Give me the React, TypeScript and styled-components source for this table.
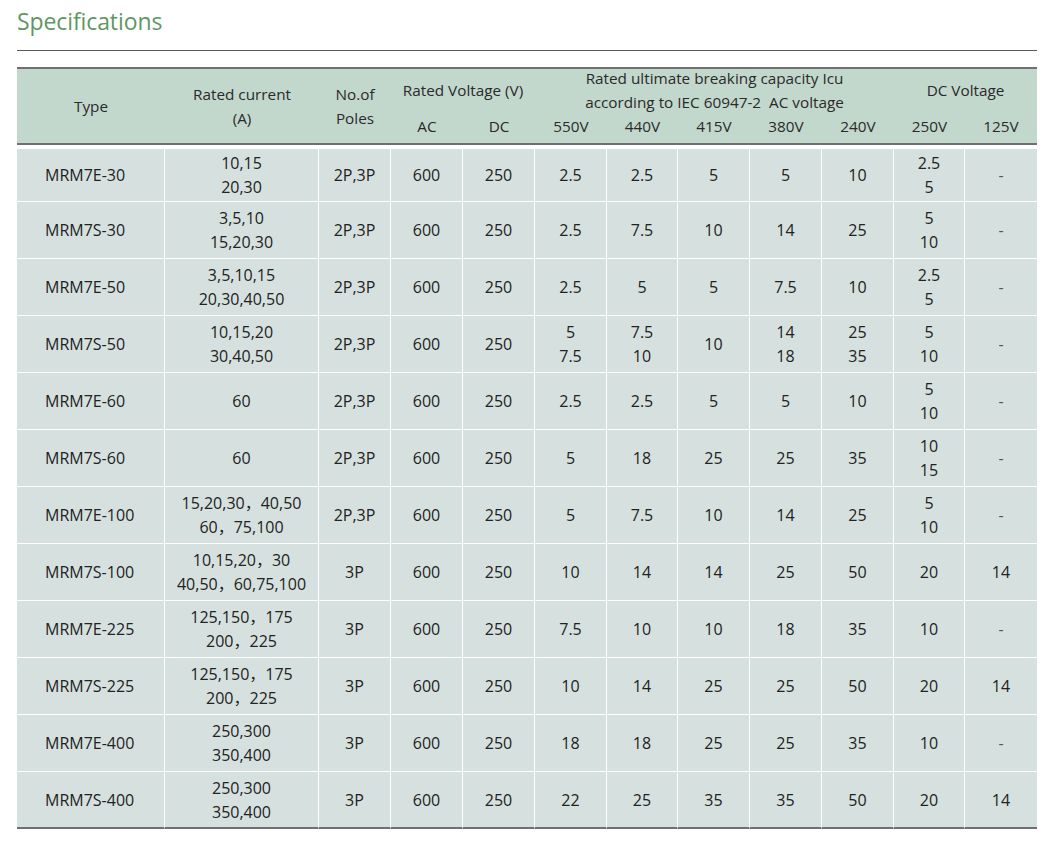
import React from "react";
import styled, { createGlobalStyle } from "styled-components";

const GlobalStyle = createGlobalStyle`
  html, body {
    margin: 0;
    padding: 0;
    background: #ffffff;
  }
  body {
    font-family: "Open Sans", "Noto Sans", "Noto Sans CJK SC", sans-serif;
    color: #222;
  }
`;

const colors = {
  green: "#5f9762",
  head: "#c3d8cd",
  body: "#d6e1df",
  border: "#707070",
};

const Page = styled.div`
  width: 1020px;
  padding: 0 18px 16px 17px;
`;

const Title = styled.h2`
  margin: 6px 0 0;
  font-size: 23px;
  line-height: 30px;
  font-weight: 400;
  color: ${colors.green};
  letter-spacing: -0.1px;
`;

const Rule = styled.hr`
  margin: 14px 0 0;
  border: 0;
  border-top: 1.5px solid #5a5a5a;
  height: 0;
`;

const SpecTable = styled.table`
  margin-top: 16px;
  width: 1020px;
  table-layout: fixed;
  border-collapse: separate;
  border-spacing: 0;
  font-size: 16px;
`;

const HeadCell = styled.th<{ $top?: boolean; $bottom?: boolean; $tall?: number; $padBottom?: number }>`
  background: ${colors.head};
  font-weight: 400;
  font-size: 15.3px;
  color: #2a2a2a;
  text-align: center;
  vertical-align: middle;
  padding: 0 0 ${(p) => p.$padBottom ?? 0}px;
  line-height: 24px;
  height: ${(p) => p.$tall ?? 28}px;
  border-top: ${(p) => (p.$top ? `2px solid ${colors.border}` : "0")};
  border-bottom: ${(p) => (p.$bottom ? `2px solid ${colors.border}` : "0")};
`;

const HeadText = styled.span<{ $shift?: number }>`
  display: block;
  margin: ${(p) => p.$shift ?? 0}px 0;
`;

const BodyRow = styled.tr`
  height: 57px;
`;

const BodyCell = styled.td<{ $left?: boolean; $first?: boolean; $last?: boolean; $end?: boolean }>`
  background: ${colors.body};
  color: #222;
  text-align: ${(p) => (p.$left ? "left" : "center")};
  padding: 0 0 0 ${(p) => (p.$left ? "28px" : "0")};
  vertical-align: middle;
  line-height: 24px;
  border-right: ${(p) => (p.$end ? "0" : "1px solid #ffffff")};
  border-top: ${(p) => (p.$first ? "4px solid #ffffff" : "0")};
  border-bottom: ${(p) => (p.$last ? `2px solid ${colors.border}` : "1px solid #ffffff")};
`;

const Dash = styled.span`
  color: #555;
`;

type Row = string[][];

const rows: Row[] = [
  [["MRM7E-30"], ["10,15", "20,30"], ["2P,3P"], ["600"], ["250"], ["2.5"], ["2.5"], ["5"], ["5"], ["10"], ["2.5", "5"], ["-"]],
  [["MRM7S-30"], ["3,5,10", "15,20,30"], ["2P,3P"], ["600"], ["250"], ["2.5"], ["7.5"], ["10"], ["14"], ["25"], ["5", "10"], ["-"]],
  [["MRM7E-50"], ["3,5,10,15", "20,30,40,50"], ["2P,3P"], ["600"], ["250"], ["2.5"], ["5"], ["5"], ["7.5"], ["10"], ["2.5", "5"], ["-"]],
  [["MRM7S-50"], ["10,15,20", "30,40,50"], ["2P,3P"], ["600"], ["250"], ["5", "7.5"], ["7.5", "10"], ["10"], ["14", "18"], ["25", "35"], ["5", "10"], ["-"]],
  [["MRM7E-60"], ["60"], ["2P,3P"], ["600"], ["250"], ["2.5"], ["2.5"], ["5"], ["5"], ["10"], ["5", "10"], ["-"]],
  [["MRM7S-60"], ["60"], ["2P,3P"], ["600"], ["250"], ["5"], ["18"], ["25"], ["25"], ["35"], ["10", "15"], ["-"]],
  [["MRM7E-100"], ["15,20,30，40,50", "60，75,100"], ["2P,3P"], ["600"], ["250"], ["5"], ["7.5"], ["10"], ["14"], ["25"], ["5", "10"], ["-"]],
  [["MRM7S-100"], ["10,15,20，30", "40,50，60,75,100"], ["3P"], ["600"], ["250"], ["10"], ["14"], ["14"], ["25"], ["50"], ["20"], ["14"]],
  [["MRM7E-225"], ["125,150，175", "200，225"], ["3P"], ["600"], ["250"], ["7.5"], ["10"], ["10"], ["18"], ["35"], ["10"], ["-"]],
  [["MRM7S-225"], ["125,150，175", "200，225"], ["3P"], ["600"], ["250"], ["10"], ["14"], ["25"], ["25"], ["50"], ["20"], ["14"]],
  [["MRM7E-400"], ["250,300", "350,400"], ["3P"], ["600"], ["250"], ["18"], ["18"], ["25"], ["25"], ["35"], ["10"], ["-"]],
  [["MRM7S-400"], ["250,300", "350,400"], ["3P"], ["600"], ["250"], ["22"], ["25"], ["35"], ["35"], ["50"], ["20"], ["14"]],
];

const widths = [148, 154, 72, 72, 72, 72, 71, 72, 72, 72, 71, 72];
const subHeads = ["AC", "DC", "550V", "440V", "415V", "380V", "240V", "250V", "125V"];

function Lines({ lines }: { lines: string[] }) {
  return (
    <>
      {lines.map((line, i) => (
        <React.Fragment key={i}>
          {i > 0 && <br />}
          {line === "-" ? <Dash>-</Dash> : line}
        </React.Fragment>
      ))}
    </>
  );
}

export default function App() {
  return (
    <Page>
      <GlobalStyle />
      <Title>Specifications</Title>
      <Rule />
      <SpecTable>
        <colgroup>
          {widths.map((w, i) => (
            <col key={i} style={{ width: w }} />
          ))}
        </colgroup>
        <thead>
          <tr>
            <HeadCell rowSpan={2} $top $bottom>
              Type
            </HeadCell>
            <HeadCell rowSpan={2} $top $bottom>
              <HeadText>
                Rated current
                <br />
                (A)
              </HeadText>
            </HeadCell>
            <HeadCell rowSpan={2} $top $bottom>
              <HeadText>
                No.of
                <br />
                Poles
              </HeadText>
            </HeadCell>
            <HeadCell colSpan={2} $top $tall={42}>
              Rated Voltage (V)
            </HeadCell>
            <HeadCell colSpan={5} $top $tall={42}>
              <HeadText $shift={-4}>
                Rated ultimate breaking capacity Icu
                <br />
                according to IEC 60947-2&nbsp; AC voltage
              </HeadText>
            </HeadCell>
            <HeadCell colSpan={2} $top $tall={42}>
              DC Voltage
            </HeadCell>
          </tr>
          <tr>
            {subHeads.map((h) => (
              <HeadCell key={h} $bottom $tall={29} $padBottom={3}>
                {h}
              </HeadCell>
            ))}
          </tr>
        </thead>
        <tbody>
          {rows.map((row, r) => (
            <BodyRow key={r}>
              {row.map((cell, c) => (
                <BodyCell
                  key={c}
                  $left={c === 0}
                  $first={r === 0}
                  $last={r === rows.length - 1}
                  $end={c === row.length - 1}
                >
                  <Lines lines={cell} />
                </BodyCell>
              ))}
            </BodyRow>
          ))}
        </tbody>
      </SpecTable>
    </Page>
  );
}
